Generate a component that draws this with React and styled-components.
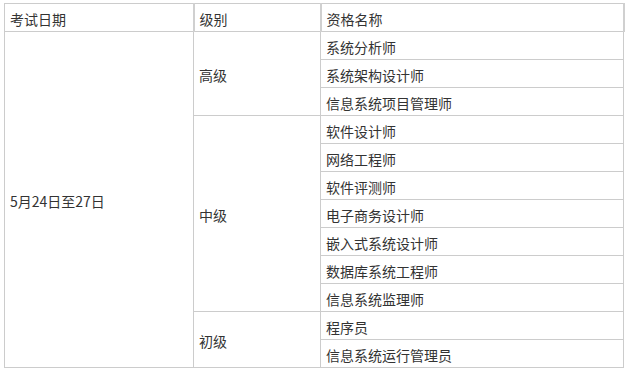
import React from "react";
import styled, { createGlobalStyle } from "styled-components";

const Global = createGlobalStyle`
  html, body { margin: 0; padding: 0; background: #fff; }
  body { font-family: "Noto Sans CJK SC", "Microsoft YaHei", sans-serif; }
`;

const Page = styled.div`
  padding: 3px 0 0 4px;
`;

const Table = styled.table`
  border-collapse: collapse;
  table-layout: fixed;
  width: 619px;
  font-size: 14px;
  color: #333;
  line-height: 20px;
`;

const Col = styled.col`
  width: ${(p) => p.$w}px;
`;

const Th = styled.th`
  height: 24px;
  padding: 3px 0 0 5px;
  text-align: left;
  font-weight: normal;
  border: 1px solid #ccc;
  border-right: 2px solid #d0d0d0;
  vertical-align: middle;
`;

const Td = styled.td`
  height: 24px;
  padding: 3px 0 0 5px;
  border: 1px solid #ccc;
  vertical-align: middle;
  white-space: nowrap;
`;

const groups = [
  { level: "高级", items: ["系统分析师", "系统架构设计师", "信息系统项目管理师"] },
  {
    level: "中级",
    items: [
      "软件设计师",
      "网络工程师",
      "软件评测师",
      "电子商务设计师",
      "嵌入式系统设计师",
      "数据库系统工程师",
      "信息系统监理师",
    ],
  },
  { level: "初级", items: ["程序员", "信息系统运行管理员"] },
];

const total = groups.reduce((n, g) => n + g.items.length, 0);

export default function App() {
  const rows = [];
  groups.forEach((g, gi) => {
    g.items.forEach((item, ii) => {
      rows.push(
        <tr key={`${gi}-${ii}`}>
          {gi === 0 && ii === 0 && <Td rowSpan={total}>5月24日至27日</Td>}
          {ii === 0 && <Td rowSpan={g.items.length}>{g.level}</Td>}
          <Td>{item}</Td>
        </tr>
      );
    });
  });
  return (
    <>
      <Global />
      <Page>
        <Table>
          <colgroup>
            <Col $w={189} />
            <Col $w={127} />
            <Col $w={303} />
          </colgroup>
          <thead>
            <tr>
              <Th>考试日期</Th>
              <Th>级别</Th>
              <Th>资格名称</Th>
            </tr>
          </thead>
          <tbody>{rows}</tbody>
        </Table>
      </Page>
    </>
  );
}
